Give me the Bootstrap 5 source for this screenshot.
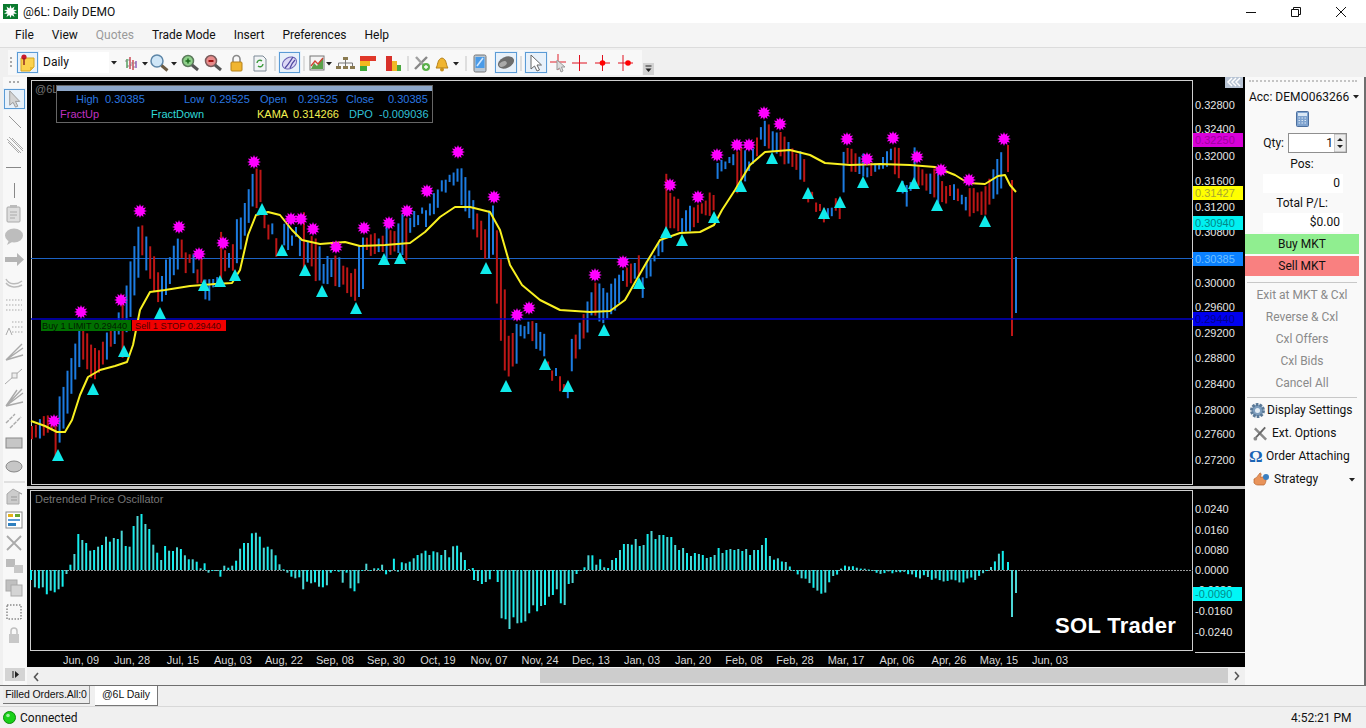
<!DOCTYPE html>
<html lang="en">
<head>
<meta charset="utf-8">
<title>@6L: Daily DEMO</title>
<link href="https://cdn.jsdelivr.net/npm/bootstrap@5.3.0/dist/css/bootstrap.min.css" rel="stylesheet">
<style>
html,body{height:728px;overflow:hidden;margin:0}
body{background:#f0f0f0;font-family:Roboto,"Liberation Sans",sans-serif;font-size:12px;color:#111;width:1366px}
.app-title{height:23px;background:#fff;font-size:12px}
.app-title .logo-ico{margin:0 5px 0 3px}
.win-wrap{padding-right:3px}
.win-btn{width:45px;height:23px}
.menu-row{height:25px;background:#f5f5f5;border-bottom:1px solid #dcdcdc;padding-left:15px;gap:18px;margin:0;list-style:none}
.menu-row .nav-link{padding:0;color:#111;font-size:12px;line-height:24px}
.menu-row .nav-link.disabled{color:#9a9a9a}
.tool-row{height:29px;background:#f0f0f0;padding-left:8px}
.tool-strip{height:25px;width:634px;background:#f8f8f8}
.tool-strip svg{flex:none;display:block}
.tb-on{outline:1px solid #5b9bd5;outline-offset:-2px;background:#e8f1fa}
.tf-select{width:82px;height:23px;font-size:12px;line-height:23px}
.tf-select .fld{width:70px;background:#fff;height:21px;line-height:21px;padding-left:4px}
.tool-more{margin-left:1px;align-self:flex-end;margin-bottom:2px}
.main-row{height:608px}
.rail{width:27px;background:#f8f8f8;padding-top:0;border-left:3px solid #f0f0f0}
.rail svg{display:block;flex:none}
.chart-col{width:1218px}
.pane-top{display:block;height:409px;width:1218px;background:#000}
.pane-sep{height:3px;background:#c8c8c8;width:1218px}
.pane-bot{display:block;height:178px;width:1218px;background:#000}
.hscroll{height:18px;background:#f0f0f0;padding-left:5px}
.hscroll .thumb{position:absolute;left:513px;width:688px;top:1px;height:15px;background:#cdcdcd}
.hscroll .next{position:absolute;left:1205px;top:1px}
.side{width:121px;background:#f9f9f9;border-right:2px solid #6f6f6f}
.side-in{width:114px}
.side-grip{height:7px;border-top:2px dotted #c4c4c4;margin:3px 2px 0 4px}
.acc{height:20px;font-size:12px;padding-left:4px;white-space:nowrap}
.calc{height:24px}
.qty-row{height:23px;font-size:12px;padding-right:12px}
.qty-box{width:59px;height:20px;background:#fff;border:1px solid #8f8f8f;font-size:12px;line-height:18px}
.qty-box .v{padding-right:1px}
.ro-label{height:20px;line-height:20px;font-size:12px;text-align:center}
.ro-val{width:80px;height:19px;line-height:19px;background:#fff;text-align:right;padding-right:3px;margin:0 0 0 18px;font-size:12px}
.tr-btn{width:114px;height:20px;padding:0;border:0;border-radius:0;font-size:12px;line-height:20px;color:#111}
.tr-buy{background:#90ee90;margin-top:2px}
.tr-sell{background:#f98080;margin-top:2px}
.tr-buy:hover{background:#90ee90}.tr-sell:hover{background:#f98080}
.side-hr{height:1px;background:#c8c8c8;margin:6px 2px 1px 2px}
.off-btn{height:22px;line-height:22px;font-size:12px;color:#8a8a8a;text-align:center}
.side-hr2{height:1px;background:#c8c8c8;margin:3px 2px 1px 2px}
.act-item{height:23px;line-height:23px;font-size:12px;white-space:nowrap}
.omega{color:#1a64b4;font-weight:700;font-size:17px;font-family:"Liberation Serif",serif;line-height:20px;width:17px}
.tab-strip{height:22px;background:#f0f0f0;border-top:1px solid #6f6f6f;padding-left:3px;border-bottom:1px solid #d8d8d8;font-size:10.5px;font-family:"Liberation Sans",sans-serif}
.tab-a{width:87px;height:18px;line-height:17px;background:#ececec;border-right:1px solid #9a9a9a;border-bottom:1px solid #777;text-align:center;letter-spacing:-.1px;white-space:nowrap}
.tab-b{width:63px;height:20px;line-height:17px;background:#fff;margin-left:5px;border-right:1px solid #777;border-bottom:1px solid #777;text-align:center}
.stat-row{height:21px;background:#f0f0f0;font-size:12px;padding-left:3px}
.stat-time{width:75px;font-size:12px}
svg text{font-family:"Liberation Sans",Arial,sans-serif}
</style>
</head>
<body>
<header class="app-title d-flex align-items-center">
  <svg class="logo-ico" width="15" height="15" viewBox="0 0 15 15"><rect width="15" height="15" fill="#0a7a2e"/><polygon fill="#fff" points="7.5,1 8.6,4.5 11.5,2.5 10.5,5.8 14,6 11,7.8 14,9.8 10.4,9.8 11.5,13 8.6,11 7.5,14 6.4,11 3.5,13 4.6,9.8 1,9.8 4,7.8 1,6 4.5,5.8 3.5,2.5 6.4,4.5"/></svg>
  <span>@6L: Daily DEMO</span>
  <div class="ms-auto d-flex win-wrap">
    <div class="win-btn d-flex align-items-center justify-content-center"><svg width="12" height="12"><path d="M1 6.5h10" stroke="#111"/></svg></div>
    <div class="win-btn d-flex align-items-center justify-content-center"><svg width="12" height="12" fill="none" stroke="#111"><path d="M1.5 3.5h7v7h-7zM3.5 3.5v-2h7v7h-2"/></svg></div>
    <div class="win-btn d-flex align-items-center justify-content-center"><svg width="12" height="12" stroke="#111"><path d="M1 1l10 10M11 1L1 11"/></svg></div>
  </div>
</header>

<ul class="nav menu-row align-items-center">
  <li class="nav-item"><a class="nav-link" href="#">File</a></li>
  <li class="nav-item"><a class="nav-link" href="#">View</a></li>
  <li class="nav-item"><a class="nav-link disabled" href="#">Quotes</a></li>
  <li class="nav-item"><a class="nav-link" href="#">Trade Mode</a></li>
  <li class="nav-item"><a class="nav-link" href="#">Insert</a></li>
  <li class="nav-item"><a class="nav-link" href="#">Preferences</a></li>
  <li class="nav-item"><a class="nav-link" href="#">Help</a></li>
</ul>

<div class="tool-row d-flex align-items-center">
  <div class="tool-strip d-flex align-items-center">
    <svg width="8" height="22"><path d="M3 5v12" stroke="#aaa" stroke-dasharray="2 2" stroke-width="2"/></svg>
    <svg class="tb-on" width="23" height="23" viewBox="0 0 23 23"><path d="M5 7h13v9l-4 4H5z" fill="#fbd24e" stroke="#d5a520"/><path d="M14 20v-4h4" fill="#e8b830"/><circle cx="8" cy="6" r="2.6" fill="#c8182c"/><path d="M8 7v7" stroke="#8a2020" stroke-width="1.4"/></svg>
    <div class="tf-select d-flex align-items-center"><span class="fld">Daily</span><svg class="ms-auto me-1" width="6" height="4"><path d="M0 0h6L3 3.5z" fill="#222"/></svg></div>
    <svg width="20" height="22" viewBox="0 0 20 22"><g stroke-width="1.2"><path d="M6 7v9" stroke="#2a8a3a"/><path d="M9 5v12" stroke="#c02030"/><path d="M12 8v10" stroke="#c02030"/><path d="M15 9v7" stroke="#7a3ab0"/></g><path d="M4 9h2M6 14h2M7 8h2M9 13h2M10 11h2M12 15h2M13 11h2" stroke="#777" stroke-width=".8"/></svg>
    <svg width="8" height="22"><path d="M1 10h6L4 13.5z" fill="#222"/></svg>
    <svg width="21" height="22" viewBox="0 0 21 22"><circle cx="8" cy="9" r="6" fill="#cfe6f7" stroke="#5d86a8" stroke-width="1.5"/><path d="M12.5 13.5l6 5" stroke="#6b5a42" stroke-width="3"/></svg>
    <svg width="9" height="22"><path d="M1 10h6L4 13.5z" fill="#222"/></svg>
    <svg width="23" height="22" viewBox="0 0 23 22"><circle cx="9" cy="9" r="5.5" fill="#8ed08a" stroke="#5c7a5c" stroke-width="1.5"/><path d="M6.500 9h5M9 6.500v5" stroke="#1c6a1c" stroke-width="1.5"/><path d="M13 13l6 5" stroke="#555" stroke-width="3"/></svg>
    <svg width="23" height="22" viewBox="0 0 23 22"><circle cx="9" cy="9" r="5.5" fill="#e88b8b" stroke="#7a5c5c" stroke-width="1.5"/><path d="M6.500 9h5" stroke="#a01010" stroke-width="2"/><path d="M13 13l6 5" stroke="#555" stroke-width="3"/></svg>
    <svg width="23" height="22" viewBox="0 0 23 22"><path d="M8 10V7a3.500 3.500 0 017 0v3" fill="none" stroke="#8a8a8a" stroke-width="1.6"/><rect x="6" y="10" width="11" height="9" rx="1" fill="#f0b530" stroke="#b5811a"/></svg>
    <svg width="23" height="22" viewBox="0 0 23 22"><path d="M6 4h9l3 3v12H6z" fill="#f2f4f6" stroke="#7c8a96"/><path d="M9 11a3 3 0 015-2M15 12a3 3 0 01-5 2" fill="none" stroke="#3c9a3c" stroke-width="1.4"/></svg>
    <svg width="7" height="22"><path d="M4 4v15" stroke="#c4c4c4"/></svg>
    <svg class="tb-on" width="23" height="23" viewBox="0 0 23 23"><ellipse cx="11.500" cy="12" rx="7.500" ry="5.500" fill="#dcd8f5" stroke="#6b63b5" transform="rotate(-30 11.500 12)"/><path d="M7 17c3-3 6-8 8-11M12 17c1-3 3-6 5-8" fill="none" stroke="#4f47a0" stroke-width="1.2"/></svg>
    <svg width="6" height="22"><path d="M3 4v15" stroke="#c4c4c4"/></svg>
    <svg width="19" height="22" viewBox="0 0 19 22"><rect x="3" y="4" width="14" height="14" fill="#f3f3f3" stroke="#777"/><path d="M4 17l3-6 3 3 3-5 3-3v11z" fill="#5aa04a"/><path d="M4 14l4-5 3 3 5-6" fill="none" stroke="#d04030" stroke-width="1.3"/></svg>
    <svg width="7" height="22"><path d="M0 10h6L3 13.500z" fill="#222"/></svg>
    <svg width="25" height="22" viewBox="0 0 25 22" fill="#8a7a50"><rect x="10" y="5" width="5" height="3"/><rect x="3" y="14" width="5" height="3"/><rect x="10" y="14" width="5" height="3"/><rect x="17" y="14" width="5" height="3"/><path d="M12.500 8v3M5.500 14v-3h14v3M12.500 11v3" stroke="#777" fill="none"/></svg>
    <svg width="22" height="22" viewBox="0 0 22 22"><rect x="2" y="4" width="16" height="5" fill="#e0382a"/><rect x="2" y="9" width="10" height="5" fill="#f2b820"/><rect x="2" y="14" width="7" height="5" fill="#3ea83a"/></svg>
    <svg width="24" height="22" viewBox="0 0 24 22"><rect x="6" y="4" width="6" height="15" fill="#d8302a"/><rect x="12" y="9" width="5" height="10" fill="#f0b828"/><rect x="17" y="13" width="4" height="6" fill="#4aa83e"/></svg>
    <svg width="7" height="22"><path d="M4 4v15" stroke="#c4c4c4"/></svg>
    <svg width="21" height="22" viewBox="0 0 21 22"><path d="M4 17L16 5" stroke="#888" stroke-width="2.4"/><path d="M5 5l11 12" stroke="#a0a0a0" stroke-width="2.4"/><circle cx="15" cy="15" r="4" fill="#5ab04a"/><path d="M13 15h4M15 13v4" stroke="#fff" stroke-width="1.3"/></svg>
    <svg width="20" height="22" viewBox="0 0 20 22"><path d="M4 16c2-2 1-9 6-10 5 1 4 8 6 10z" fill="#f0b530" stroke="#b5811a"/><circle cx="10" cy="17.500" r="2" fill="#c9901c"/></svg>
    <svg width="9" height="22"><path d="M1 10h6L4 13.500z" fill="#222"/></svg>
    <svg width="9" height="22"><path d="M5 4v15" stroke="#c4c4c4"/></svg>
    <svg width="20" height="22" viewBox="0 0 20 22"><rect x="4" y="3" width="12" height="17" rx="1.500" fill="#b9c6d2" stroke="#777"/><rect x="5.500" y="5" width="9" height="11" fill="#4a9be8"/><path d="M7 14L13 6" stroke="#cfe7ff" stroke-width="1.500"/></svg>
    <svg class="tb-on ms-1 me-0" width="24" height="23" viewBox="0 0 24 23"><ellipse cx="12" cy="11.500" rx="8.500" ry="5.500" fill="#6d6d6d" transform="rotate(-25 12 11.500)"/><ellipse cx="9" cy="13" rx="4" ry="2.500" fill="#aaa" transform="rotate(-25 9 13)"/></svg>
    <svg width="6" height="22"><path d="M3 4v15" stroke="#c4c4c4"/></svg>
    <svg class="tb-on" width="24" height="23" viewBox="0 0 24 23"><path d="M7 4v14l3.500-3 2.500 5 2.500-1-2.500-5h4.500z" fill="#fff" stroke="#666"/></svg>
    <svg width="20" height="22" viewBox="0 0 20 22"><path d="M2 10h16M10 2v16" stroke="#e0202a"/><path d="M9 8v10l2.500-2 1.500 4 2-1-1.500-4h3.500z" fill="#ddd" stroke="#999"/></svg>
    <svg width="23" height="22" viewBox="0 0 23 22"><path d="M4 11h15M11.500 3v16" stroke="#e0101e"/></svg>
    <svg width="23" height="22" viewBox="0 0 23 22"><path d="M4 11h15M11.500 3v16" stroke="#e0101e"/><circle cx="11.500" cy="11" r="2.800" fill="#f00"/></svg>
    <svg width="23" height="22" viewBox="0 0 23 22"><path d="M4 11h15M9 3v16" stroke="#e0101e"/><circle cx="14" cy="11" r="2.800" fill="#f00"/></svg>
  </div>
  <svg class="tool-more" width="11" height="12" viewBox="0 0 11 12"><rect width="11" height="12" fill="#d2d2d2"/><path d="M2.500 3h6" stroke="#222"/><path d="M2.500 5.500h6L5.500 9z" fill="#222"/></svg>
</div>

<main class="main-row d-flex">
  <nav class="rail d-flex flex-column">
    <svg width="24" height="11"><path d="M6 5h12" stroke="#aaa" stroke-width="2" stroke-dasharray="2 2"/></svg>
    <svg class="tb-on" width="23" height="22" viewBox="0 0 24 23"><path d="M7 3v15l3.500-3 2.500 5 2.500-1-2.500-5h4.500z" fill="#d4d4d4" stroke="#999"/></svg>
    <svg width="24" height="23"><path d="M6 6l12 12" stroke="#999"/></svg>
    <svg width="24" height="23" stroke="#aaa"><path d="M4 6l14 14M6 4l14 14M5 9l11 11M9 5l11 11"/></svg>
    <svg width="24" height="23"><path d="M3 11.500h15" stroke="#888"/></svg>
    <svg width="24" height="23"><path d="M11.500 4v15" stroke="#888"/></svg>
    <svg width="24" height="23"><rect x="4" y="5" width="13" height="15" rx="1" fill="#ddd" stroke="#aaa"/><rect x="7" y="3" width="7" height="3" fill="#bbb"/><path d="M7 10h7M7 13h7M7 16h5" stroke="#aaa"/></svg>
    <svg width="24" height="23"><ellipse cx="11" cy="10.500" rx="9" ry="7" fill="#bdbdbd"/><path d="M6 15l-2 5 5-3z" fill="#bdbdbd"/></svg>
    <svg width="24" height="23"><path d="M2 9h12V5l7 6.500-7 6.500v-4H2z" fill="#b5b5b5"/></svg>
    <svg width="24" height="23" fill="none" stroke="#bbb" stroke-width="1.500"><path d="M3 8c3 6 11 6 16 2M3 12c4 5 11 5 16 2"/></svg>
    <svg width="24" height="23" stroke="#aaa" stroke-dasharray="1.500 1.500"><path d="M3 6h16M3 11h16M3 16h16"/></svg>
    <svg width="24" height="23" stroke="#aaa"><path d="M9 5h11M9 10h11M9 15h11" stroke-dasharray="1.500 1.500"/><path d="M3 18l3-7 3 7" fill="none"/></svg>
    <svg width="24" height="23" fill="none" stroke="#aaa" stroke-width="1.400"><path d="M3 20L20 8M3 20L19 4M3 20l17-5"/></svg>
    <svg width="24" height="23" fill="none" stroke="#aaa"><path d="M2 21L19 6"/><rect x="9" y="10" width="5" height="5" fill="#eee"/></svg>
    <svg width="24" height="23" fill="none" stroke="#aaa" stroke-width="1.400"><path d="M3 20L20 7M3 20L19 3M3 20l17-4M3 20L14 4"/></svg>
    <svg width="24" height="23" fill="none" stroke="#aaa" stroke-width="1.400"><path d="M3 14L12 5M7 19L18 8" stroke-dasharray="4 1"/></svg>
    <svg width="24" height="23"><rect x="3" y="6" width="16" height="10" fill="#c6c6c6" stroke="#888"/></svg>
    <svg width="24" height="23"><ellipse cx="11" cy="11.500" rx="8" ry="5.500" fill="#c6c6c6" stroke="#888"/></svg>
    <svg width="24" height="7"><path d="M1 4h21" stroke="#c8c8c8"/></svg>
    <svg width="24" height="23"><path d="M4 19V9l6-5 9 5-3-1v11z" fill="#ccc" stroke="#aaa"/><path d="M8 12h6M8 15h6" stroke="#999"/></svg>
    <svg width="24" height="23"><rect x="3" y="4" width="16" height="16" fill="#fff" stroke="#8a8a8a"/><rect x="5" y="6" width="5" height="3" fill="#e5b21c"/><rect x="12" y="6" width="5" height="3" fill="#67a62f"/><rect x="5" y="11" width="12" height="2" fill="#5a9bd5"/><rect x="5" y="15" width="8" height="3" fill="#2f7fbf"/></svg>
    <svg width="24" height="23"><path d="M4 5l14 14M18 5L4 19" stroke="#aaa" stroke-width="1.800"/></svg>
    <svg width="24" height="23"><rect x="3" y="5" width="9" height="8" fill="#bcbcbc"/><rect x="11" y="11" width="9" height="8" fill="#c8c8c8"/></svg>
    <svg width="24" height="23"><rect x="3" y="3" width="11" height="11" fill="#c0c0c0" stroke="#aaa"/><rect x="8" y="8" width="11" height="11" fill="#d4d4d4" stroke="#aaa"/></svg>
    <svg width="24" height="23"><rect x="4" y="5" width="14" height="14" fill="none" stroke="#555" stroke-dasharray="1.500 1.500"/></svg>
    <svg width="24" height="23"><path d="M8 11V8a3 3 0 016 0v3" fill="none" stroke="#c0c0c0" stroke-width="1.500"/><rect x="6" y="11" width="10" height="9" fill="#c8c8c8"/></svg>
    <svg class="mt-auto mb-1" width="24" height="13"><rect x="2" width="20" height="13" fill="#d4d4d4"/><path d="M10 3v7" stroke="#222"/><path d="M12 3l4 3.500-4 3.500z" fill="#222"/></svg>
  </nav>

  <div class="chart-col d-flex flex-column">
    <svg class="pane-top" id="p1" viewBox="27 77 1218 409" width="1218" height="409"></svg>
    <div class="pane-sep"></div>
    <svg class="pane-bot" id="p2" viewBox="27 489 1218 178" width="1218" height="178"></svg>
    <div class="hscroll position-relative">
      <svg width="10" height="16"><path d="M6 4L2.500 8 6 12" fill="none" stroke="#555" stroke-width="1.600"/></svg>
      <div class="thumb"></div>
      <svg class="next" width="10" height="16"><path d="M3 4l3.500 4L3 12" fill="none" stroke="#555" stroke-width="1.600"/></svg>
    </div>
  </div>

  <aside class="side">
    <div class="side-in d-flex flex-column">
      <div class="side-grip"></div>
      <div class="acc d-flex align-items-center">Acc: DEMO063266<svg class="ms-1" width="6" height="4"><path d="M0 0h6L3 3.500z" fill="#222"/></svg></div>
      <div class="calc d-flex justify-content-center align-items-center"><svg width="13" height="16" viewBox="0 0 13 16"><rect x=".5" y=".5" width="12" height="15" rx="1" fill="#7fa3cf" stroke="#4c6f9e"/><rect x="2" y="2" width="9" height="3" fill="#dbe8f5"/><path d="M2.500 7h8M2.500 9.500h8M2.500 12h8" stroke="#dbe8f5" stroke-dasharray="1.500 1.500"/></svg></div>
      <div class="qty-row d-flex align-items-center justify-content-end">
        <span class="me-1">Qty:</span>
        <div class="qty-box d-flex justify-content-end"><span class="v">1</span><svg width="12" height="18" viewBox="0 0 12 18"><rect width="12" height="18" fill="#ececec" stroke="#aaa"/><path d="M3 7l3-3 3 3zM3 11h6l-3 3z" fill="#222"/></svg></div>
      </div>
      <div class="ro-label">Pos:</div>
      <div class="ro-val">0</div>
      <div class="ro-label">Total P/L:</div>
      <div class="ro-val">$0.00</div>
      <button class="btn tr-btn tr-buy" type="button">Buy MKT</button>
      <button class="btn tr-btn tr-sell" type="button">Sell MKT</button>
      <div class="side-hr"></div>
      <div class="off-btn">Exit at MKT &amp; Cxl</div>
      <div class="off-btn">Reverse &amp; Cxl</div>
      <div class="off-btn">Cxl Offers</div>
      <div class="off-btn">Cxl Bids</div>
      <div class="off-btn">Cancel All</div>
      <div class="side-hr2"></div>
      <div class="act-item d-flex align-items-center ps-1"><svg class="me-0" width="18" height="17" viewBox="0 0 18 17"><circle cx="8.500" cy="8.500" r="6" fill="#7d9dbd" stroke="#5a7896" stroke-width="3" stroke-dasharray="2.500 1.200"/><circle cx="8.500" cy="8.500" r="2.500" fill="#e4edf5"/></svg>Display Settings</div>
      <div class="act-item d-flex align-items-center"><svg class="ms-2 me-1" width="15" height="17" viewBox="0 0 16 17"><path d="M2 3l12 12" stroke="#8a8a8a" stroke-width="2.600"/><path d="M13 2L3 13" stroke="#666" stroke-width="2"/><circle cx="2.500" cy="14" r="2" fill="#8a8a8a"/></svg>Ext. Options</div>
      <div class="act-item d-flex align-items-center ps-1"><span class="omega">Ω</span>Order Attaching</div>
      <div class="act-item d-flex align-items-center"><svg class="ms-2 me-1" width="17" height="17" viewBox="0 0 17 17"><path d="M1 8c3-1 4-4 6-6 2 0 1 3 0 4h5c2 0 1 7-1 8H5c-2 0-3-1-4-2z" fill="#e8935a" stroke="#b5622b" stroke-width=".7"/><circle cx="13" cy="6" r="3" fill="#3a7fc0"/></svg>Strategy<svg class="ms-auto me-1" width="6" height="4"><path d="M0 0h6L3 3.500z" fill="#222"/></svg></div>
    </div>
  </aside>
</main>

<div class="tab-strip d-flex align-items-start">
  <div class="tab-a">Filled Orders.All:0</div>
  <div class="tab-b">@6L Daily</div>
</div>
<footer class="stat-row d-flex align-items-center">
  <svg class="me-1" width="13" height="13" viewBox="0 0 13 13"><circle cx="6.500" cy="6.500" r="6" fill="#18d018" stroke="#0a8a0a"/><circle cx="5" cy="4.500" r="1.800" fill="#9ff09f"/></svg>
  <span>Connected</span>
  <span class="ms-auto stat-time">4:52:21 PM</span>
</footer>

<script>
(function(){
  var highs=[[54,421],[81,312],[121,300],[140,211],[179,227],[199,254],[223,243],[254,162],[291,219],[301,219],[313,229],[336,247],[364,228],[389,223],[407,211],[427,191],[458,152],[494,197],[517,315],[529,308],[595,275],[623,262],[670,185],[698,197],[717,155],[737,145],[749,145],[764,113],[780,124],[847,139],[867,159],[893,138],[917,157],[941,170],[969,180],[1004,139]];
  var lows=[[58,455],[93,389],[124,351],[160,313],[204,285],[220,281],[235,275],[262,209],[282,250],[305,270],[322,291],[356,308],[384,259],[400,258],[486,268],[506,386],[545,364],[568,386],[604,330],[639,283],[666,232],[682,240],[714,217],[741,186],[772,158],[808,193],[824,213],[840,202],[863,182],[902,186],[914,183],[937,205],[985,221]];
  var kama=[[31,421],[45,426],[57,432],[65,432],[72,420],[80,395],[88,377],[100,370],[115,366],[127,362],[133,345],[140,310],[150,292],[165,290],[190,286],[215,284],[232,283],[240,270],[248,235],[256,215],[268,212],[280,215],[292,230],[302,240],[320,244],[345,242],[360,246],[385,245],[410,243],[425,232],[440,217],[455,207],[470,207],[490,212],[500,230],[510,265],[522,285],[540,300],[560,310],[590,312],[610,311],[625,300],[645,265],[660,240],[680,233],[700,232],[714,225],[722,210],[735,190],[750,165],[765,152],[790,150],[810,155],[825,163],[850,165],[880,164],[910,165],[935,167],[955,175],[968,183],[985,184],[998,176],[1005,175],[1010,185],[1016,192]];
  function rnd(i){var s=Math.sin(i*12.9898+4.1)*43758.5453;return s-Math.floor(s);}
  function star(x,y,r){var n=12,p=[];for(var i=0;i<n*2;i++){var a=i*Math.PI/n,R=i%2?r*.62:r;p.push((x+R*Math.cos(a)).toFixed(1)+','+(y+R*Math.sin(a)).toFixed(1));}return '<polygon points="'+p.join(' ')+'" fill="#f0f"/>';}
  function tri(x,y){return '<polygon points="'+(x-6)+','+(y+6)+' '+(x+6)+','+(y+6)+' '+x+','+(y-6)+'" fill="#10eaea"/>';}
  function txt(x,y,s,fill,extra){return '<text x="'+x+'" y="'+y+'" fill="'+fill+'" font-size="11" '+(extra||'')+'>'+s+'</text>';}

  var piv=[[31,425,0]];
  highs.forEach(function(h){piv.push([h[0],h[1]+7,1]);});
  lows.forEach(function(l){piv.push([l[0],l[1]-7,-1]);});
  piv.sort(function(a,b){return a[0]-b[0];});

  var o='';
  o+='<rect x="31.500" y="80.500" width="1161" height="404" fill="none" stroke="#cfcfcf"/>';
  o+='<path d="M31 258.500H1193" stroke="#1c62c4"/>';
  var i=0,idx=0;
  for(var x=32;x<1003;x+=3.94,idx++){
    while(i<piv.length-2&&piv[i+1][0]<=x)i++;
    var a=piv[i],b=piv[i+1],t=(x-a[0])/Math.max(1,b[0]-a[0]);
    var z=a[1]+(b[1]-a[1])*t;
    var slope=Math.abs(b[1]-a[1])/Math.max(1,b[0]-a[0])*3.94;
    var len=7+rnd(idx)*15+slope*1.1;
    var falling=b[1]>a[1];
    var w=falling?t:1-t;
    var top=z-len*w+rnd(idx+40)*2,bot=top+len;
    if(a[2]==b[2]){top=z+rnd(idx+9)*12;bot=top+6+rnd(idx+7)*16;}
    var blue=falling?rnd(idx+77)<.22:rnd(idx+77)<.8;
    o+='<line x1="'+x.toFixed(1)+'" x2="'+x.toFixed(1)+'" y1="'+top.toFixed(1)+'" y2="'+bot.toFixed(1)+'" stroke="'+(blue?'#1c7be0':'#bd1616')+'" stroke-width="2"/>';
  }
  o+='<path d="M1008 145V172" stroke="#bd1616" stroke-width="2"/><path d="M1012 180V336" stroke="#bd1616" stroke-width="2"/><path d="M1016 257V313" stroke="#1c7be0" stroke-width="2"/>';
  o+='<path d="M31 319H1193" stroke="#0000c8" stroke-width="1.500"/>';
  o+='<polyline fill="none" stroke="#f8f020" stroke-width="2" stroke-linejoin="round" points="'+kama.map(function(p){return p.join(',');}).join(' ')+'"/>';
  highs.forEach(function(h){o+=star(h[0],h[1],7);});
  lows.forEach(function(l){o+=tri(l[0],l[1]);});
  o+=txt(35,93,'@6L','#777');
  o+='<rect x="56.500" y="85.500" width="376" height="37" fill="#000" stroke="#666"/><rect x="57" y="86" width="375" height="5" fill="#8da6c8"/>';
  var B='#2a78e0';
  [[76,'High'],[105,'0.30385'],[184,'Low'],[210,'0.29525'],[260,'Open'],[298,'0.29525'],[346,'Close'],[388,'0.30385']].forEach(function(t){o+=txt(t[0],103,t[1],B);});
  o+=txt(60,118,'FractUp','#c030c0')+txt(151,118,'FractDown','#30d8d8')+txt(257,118,'KAMA','#f4f050')+txt(293,118,'0.314266','#f4f050')+txt(349,118,'DPO','#30c0d8')+txt(379,118,'-0.009036','#30c0d8');
  o+='<rect x="41" y="320" width="90" height="11" fill="#007000"/><rect x="132" y="320" width="94" height="11" fill="#f00000"/>';
  o+='<text x="42" y="329" font-size="9.200" fill="#002000">Buy 1 LIMIT 0.29440</text><text x="135" y="329" font-size="9.200" fill="#500000">Sell 1 STOP 0.29440</text>';
  [['0.32800',109],['0.32400',133],['0.32000',160],['0.31600',185],['0.31200',211],['0.30800',236],['0.30000',287],['0.29600',311],['0.29200',337],['0.28800',362],['0.28400',388],['0.28000',414],['0.27600',438],['0.27200',464]].forEach(function(t){o+=txt(1195,t[1],t[0],'#e6e6e6');});
  [[133,'#d800d8','#a000a0','0.32250'],[186,'#ffff00','#a8a830','0.31427'],[216,'#00f0f0','#008888','0.30940'],[252,'#0a80ff','#70c0ff','0.30385'],[312,'#0000ee','#00008b','0.29440']].forEach(function(t){o+='<rect x="1193" y="'+t[0]+'" width="50" height="14" fill="'+t[1]+'"/>'+txt(1195,t[0]+11,t[3],t[2]);});
  o+='<rect x="1225" y="77" width="18" height="11" fill="#b8c4d4"/><path d="M1232 78l-4 4 4 4M1236 78l-4 4 4 4M1240 78l-4 4 4 4" fill="none" stroke="#fff" stroke-width="1.500"/>';
  document.getElementById('p1').innerHTML=o;

  var left=[-30,-52,-55,-52,-73,-62,-67,-58,-50,-12,16,48,108,90,81,58,60,70,75,100,85,96,93,118,72,70,132,162,168,138,123,76,52,30,72,58,57,68,63,44,32,32,25,5,20,-8,-2,0,-20,13,7,13,28,64,81,81,110,112,100,67,70,62,44,17,2,-8,-20,-25,-22,-58,-35,-40,-37,-50,-52,-46,-8,-2,-5,-38,-8,-55,-64,-40,-2,19,-2,5,5,16,-13,-5,34,-5,23,20,25,35,45,50,58,45,56,53,45,60,38,71,73,53,30,3,6];
  var mid=[-30,-33,-42,-36,-28,-3,-36,-145,-148,-177,-142,-160,-158,-154,-130,-106,-124,-108,-105,-80,-75,-58,-100,-105,-42,-39,-12,-3,8,44,44,16,32,8,6,30,36,60,78,78,76,93,72,75,108,117,93,105,105,99,99,75,60,66,51,42,51,48,45,36,39,45,66,51,60,63,60,63,57,63,45,60,60,75,96,42];
  var anchors=[[770,14],[785,8],[797,-3],[810,-12],[822,-25],[832,-9],[845,5],[860,3],[880,-3],[905,-2],[925,-8],[945,-10],[960,-14],[975,-8],[985,-3],[995,10],[1003,18]];
  var q='';
  q+='<rect x="30.500" y="490.500" width="1162" height="160" fill="none" stroke="#cfcfcf"/>';
  q+='<path d="M1195 652.500H1245" stroke="#cfcfcf"/>';
  q+='<path d="M31 570.500H1193" stroke="#999" stroke-dasharray="2 1"/>';
  function obar(x,h,k){
    var c=k%2?'#4cd6d6':'#14eeee',y=h>=0?570-h:570,H=Math.max(Math.abs(h),1);
    return '<rect x="'+(x-1).toFixed(1)+'" y="'+y.toFixed(1)+'" width="2" height="'+H.toFixed(1)+'" fill="'+c+'"/>';
  }
  left.forEach(function(v,k){q+=obar(31+k*3.945,v/3,k);});
  mid.forEach(function(v,k){q+=obar(474+k*3.945,v/3,k);});
  var k2=0,aI=0;
  for(var xx=774;xx<1004;xx+=3.945,k2++){
    while(aI<anchors.length-2&&anchors[aI+1][0]<=xx)aI++;
    var A=anchors[aI],C=anchors[aI+1],tt=(xx-A[0])/(C[0]-A[0]);
    var val=A[1]+(C[1]-A[1])*tt;
    val+=(rnd(k2+200)-.5)*Math.min(6,Math.abs(val)*.6+1);
    q+=obar(xx,val,k2);
  }
  q+=obar(1008,8,0)+obar(1012,-47,1)+obar(1016,-23,1);
  q+=txt(35,503,'Detrended Price Oscillator','#777');
  q+='<text x="1055" y="633" font-size="22" font-weight="700" fill="#fff" letter-spacing=".3">SOL Trader</text>';
  [['0.0240',513],['0.0160',534],['0.0080',554],['0.0000',574],['-0.0080',594],['-0.0160',615],['-0.0240',636]].forEach(function(t){q+=txt(1195,t[1],t[0],'#e6e6e6');});
  q+='<rect x="1193" y="587" width="49" height="14" fill="#00f6f6"/>'+txt(1195,598,'-0.0090','#008c8c');
  [['Jun, 09',81],['Jun, 28',132],['Jul, 15',183],['Aug, 03',233],['Aug, 22',284],['Sep, 08',335],['Sep, 30',386],['Oct, 19',438],['Nov, 07',489],['Nov, 24',540],['Dec, 13',591],['Jan, 03',642],['Jan, 20',693],['Feb, 08',744],['Feb, 28',795],['Mar, 17',846],['Apr, 06',897],['Apr, 26',949],['May, 15',999],['Jun, 03',1050]].forEach(function(t){q+=txt(t[1],664,t[0],'#d8d8d8','text-anchor="middle"');});
  document.getElementById('p2').innerHTML=q;
})();
</script>
<script src="https://cdn.jsdelivr.net/npm/bootstrap@5.3.0/dist/js/bootstrap.bundle.min.js"></script>
</body>
</html>
